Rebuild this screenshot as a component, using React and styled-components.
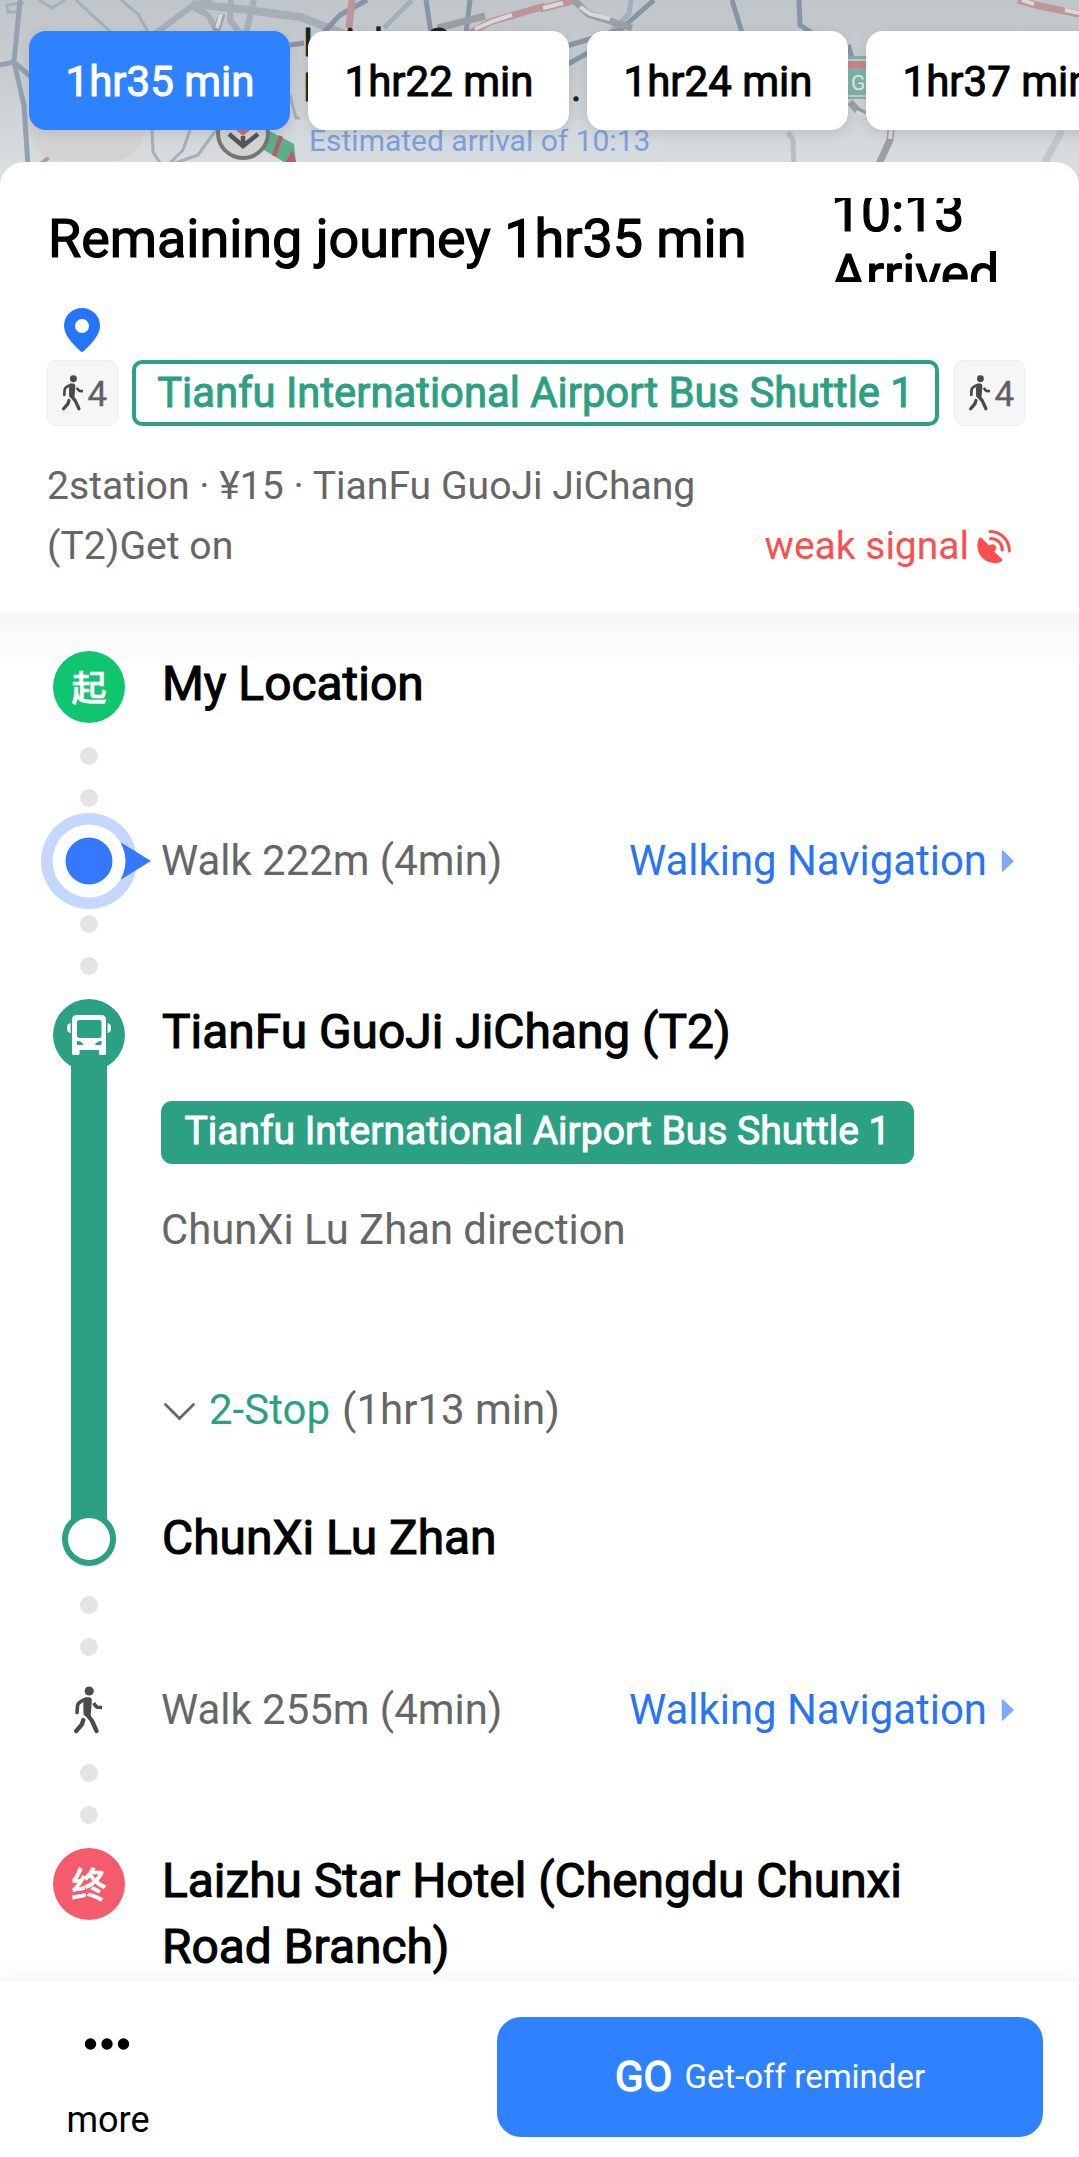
import React from 'react';
import styled, { createGlobalStyle } from 'styled-components';

const GlobalStyle = createGlobalStyle`
  * {
    box-sizing: border-box;
  }

  body {
    margin: 0;
    background: #fff;
    font-family: Roboto, 'Noto Sans CJK SC', sans-serif;
    color: #000;
  }

  svg {
    display: block;
    flex: none;
  }
`;

const colors = {
  blue: '#2e82ff',
  link: '#2874f5',
  bus: '#2ca082',
  text: '#666',
  dot: '#e4e4e4',
};

const Page = styled.div`
  width: 1079px;
  height: 2157px;
  display: flex;
  flex-direction: column;
  overflow: hidden;
`;

const MapArea = styled.div`
  position: relative;
  height: 192px;
  flex: none;
  overflow: hidden;

  > svg {
    position: absolute;
    top: 0;
    left: 0;
  }
`;

const ChipRow = styled.div`
  position: relative;
  display: flex;
  gap: 18px;
  padding: 31px 0 0 29px;
`;

const Chip = styled.div`
  flex: none;
  width: 261px;
  height: 99px;
  padding: 2px 0 0 1px;
  display: flex;
  align-items: center;
  justify-content: center;
  border-radius: 17px;
  background: ${props => (props.$active ? colors.blue : '#fff')};
  color: ${props => (props.$active ? '#fff' : '#000')};
  font-size: 42px;
  -webkit-text-stroke: 1px currentColor;
  box-shadow: 0 3px 12px rgba(60, 70, 80, 0.16);
`;

const Summary = styled.section`
  position: relative;
  flex: none;
  height: 450px;
  margin-top: -30px;
  padding: 36px 54px 0 47px;
  background: #fff;
  border-radius: 24px 24px 0 0;
  z-index: 1;
`;

const TitleRow = styled.div`
  display: flex;
  justify-content: space-between;
  height: 84px;
  overflow: hidden;
`;

const Title = styled.h1`
  margin: 0;
  padding-left: 1px;
  line-height: 82px;
  font-size: 53.900px;
  font-weight: 400;
  white-space: nowrap;
  -webkit-text-stroke: 1.2px currentColor;
`;

const Arrival = styled.div`
  width: 194px;
  display: flex;
  flex-direction: column;
  justify-content: center;
  font-size: 53.500px;
  -webkit-text-stroke: 1.2px currentColor;

  span {
    flex: none;
    line-height: 61px;
  }

  span:first-child {
    padding-top: 5px;
  }
`;

const PinRow = styled.div`
  padding: 26px 0 8px 17px;
`;

const RouteRow = styled.div`
  display: flex;
  justify-content: space-between;
`;

const WalkChip = styled.div`
  width: 71px;
  height: 66px;
  padding-left: 14px;
  display: flex;
  align-items: center;
  gap: 3px;
  border: 1px solid #eceef0;
  border-radius: 9px;
  background: #f5f6f8;
  color: #606060;
  font-size: 35px;
  -webkit-text-stroke: 0.3px currentColor;

  span {
    padding-top: 2px;
  }
`;

const LineTag = styled.div`
  width: 807px;
  height: 66px;
  margin-right: 1px;
  border: 4px solid ${colors.bus};
  border-radius: 10px;
  color: ${colors.bus};
  font-size: 41.800px;
  line-height: 57px;
  text-align: center;
  -webkit-text-stroke: 1px currentColor;
`;

const InfoRow = styled.div`
  display: flex;
  justify-content: space-between;
  align-items: flex-end;
  margin-top: 30px;
  padding-right: 14px;
  font-size: 39.150px;
  line-height: 60px;
  color: ${colors.text};
`;

const InfoText = styled.div`
  width: 660px;
`;

const Signal = styled.div`
  display: flex;
  align-items: center;
  gap: 8px;
  color: #fb4f4f;
  font-size: 39px;
`;

const Timeline = styled.main`
  flex: none;
  height: 1369px;
  padding: 39px 65px 0 41px;
  background: linear-gradient(#f5f6f8, #fafafa 22px, #fff 60px);
`;

const Step = styled.div`
  display: grid;
  grid-template-columns: 96px 1fr;
  column-gap: 24px;
`;

const Rail = styled.div`
  display: flex;
  flex-direction: column;
  align-items: center;
`;

const StopName = styled.div`
  padding-left: 1px;
  font-size: 47.900px;
  line-height: ${props => props.$line || 66}px;
  -webkit-text-stroke: 1.1px currentColor;
`;

const EndBadge = styled.div`
  width: 72px;
  height: 72px;
  border-radius: 50%;
  background: ${props => props.$color};
  color: #fff;
  font-family: 'Noto Sans CJK SC', sans-serif;
  font-size: 35px;
  font-weight: 500;
  line-height: 70px;
  text-align: center;
  -webkit-text-stroke: 0.6px currentColor;
`;

const Dots = styled.div`
  width: 96px;
  display: flex;
  flex-direction: column;
  align-items: center;
  gap: 24px;
  padding: ${props => props.$top}px 0 ${props => props.$bottom}px;

  i {
    width: 18px;
    height: 18px;
    border-radius: 50%;
    background: ${colors.dot};
  }
`;

const WalkRow = styled(Step)`
  height: 96px;
  align-items: center;
`;

const WalkText = styled.div`
  display: flex;
  justify-content: space-between;
  font-size: 41.900px;
  line-height: 60px;
  color: ${colors.text};
`;

const NavLink = styled.div`
  display: flex;
  align-items: center;
  gap: 14px;
  color: ${colors.link};
`;

const RideBar = styled.div`
  flex: 1;
  width: 36px;
  margin: -8px 0;
  background: ${colors.bus};
`;

const RideEnd = styled.div`
  position: relative;
  width: 54px;
  height: 54px;
  border: 6px solid ${colors.bus};
  border-radius: 50%;
  background: #fff;
`;

const RideTag = styled.div`
  width: 753px;
  height: 63px;
  margin: 36px 0;
  border-radius: 11px;
  background: ${colors.bus};
  color: #fff;
  font-size: 39px;
  line-height: 61px;
  text-align: center;
  -webkit-text-stroke: 1px currentColor;
`;

const RideText = styled.div`
  font-size: 41.800px;
  line-height: 60px;
  color: ${colors.text};
`;

const StopCount = styled(RideText)`
  display: flex;
  align-items: center;
  margin: 120px 0 70px;
  padding-left: 3px;
  font-size: 42px;

  svg {
    margin: 4px 14px 0 0;
  }

  em {
    font-style: normal;
    color: ${colors.bus};
    margin-right: 12px;
  }
`;

const Footer = styled.footer`
  position: relative;
  flex: 1;
  display: flex;
  justify-content: space-between;
  padding: 36px 36px 20px 0;
  background: #fff;
  box-shadow: 0 -2px 20px rgba(0, 0, 0, 0.06);
  z-index: 1;
`;

const More = styled.div`
  width: 216px;
  padding-top: 21px;
  display: flex;
  flex-direction: column;
  align-items: center;
  gap: 49px;
  font-size: 36px;
  line-height: 42px;
`;

const GoButton = styled.button`
  width: 546px;
  height: 120px;
  padding: 0 0 2px;
  display: flex;
  align-items: center;
  justify-content: center;
  gap: 12px;
  border: none;
  border-radius: 24px;
  background: ${colors.blue};
  color: #fff;
  font-family: inherit;
  font-size: 33px;

  b {
    font-size: 42px;
    font-weight: 400;
    -webkit-text-stroke: 1.4px currentColor;
  }
`;

const CityMap = () => (
  <svg width="1079" height="192" viewBox="0 0 1079 192" fill="none">
    <defs>
      <linearGradient id="sky" x1="0" y1="0" x2="0" y2="1">
        <stop offset="0" stopColor="#c0c5c9" />
        <stop offset="0.5" stopColor="#cbd0d4" />
        <stop offset="0.9" stopColor="#dadee1" />
      </linearGradient>
    </defs>
    <rect width="1079" height="192" fill="url(#sky)" />
    {/* minor streets */}
    <g stroke="#a5afb8" strokeWidth="3">
      <path d="M24 3 L7 5 L8 12 L14 12 L22 10 M39 0 L52 8 L65 0" />
      <path d="M76 0 L92 15 L112 33 M121 0 L138 14 L148 32" />
      <path d="M152 36 L192 6 L212 0" strokeWidth="6" />
      <path d="M192 4 L240 9 L300 17 L345 34" strokeWidth="8" />
      <path d="M194 8 L208 15 L218 33 M231 0 L230 20 L240 33 M254 0 L246 33" strokeWidth="6" />
      <path d="M152 130 L153 152 L162 166 M190 130 L183 150 L170 163 M216 130 L198 155 L170 165" />
      <path d="M412 0 L384 28 M631 0 L629 14 L610 32" strokeWidth="5" />
      <path d="M788 132 L793 140 L794 166" strokeWidth="5" stroke="#b5bec7" />
      <path d="M1062 130 L1043 166" strokeWidth="7" stroke="#c1c6cb" />
      <path d="M290 95 L296 118 L300 118" />
    </g>
    {/* main roads */}
    <g stroke="#8695a8" strokeWidth="5">
      <path d="M20 0 L14 62 L0 65 M14 62 L30 76 M14 62 L24 105 L28 166" stroke="#93a1b0" />
      <path d="M367 0 L340 15 L322 34 M426 0 L431 33 M470 0 L466 33" />
      <path d="M654 0 L620 30 L560 48 M732 0 L742 33 M799 0 L800 25 L812 33 M568 64 L588 53 M848 45 L852 58" />
      <path d="M290 45 L304 43" />
    </g>
    {/* expressways */}
    <g strokeWidth="7" stroke="#bc969c">
      <path d="M352 0 L349 28 M470 33 L490 22 L545 6 M540 9 L576 0" />
      <path d="M1018 0 L1040 6 L1079 14" />
      <path d="M38 166 L58 150" strokeWidth="4" />
    </g>
    <g strokeWidth="7" stroke="#9c9ea5">
      <path d="M222 14 L216 32 M438 28 L485 16 M574 0 L588 14 L632 28 M850 102 L857 110 L868 116 M891 130 L890 140 L878 166" />
    </g>
    <g strokeWidth="4" stroke="#dcd8d9">
      <path d="M221 14 L217 28 M475 29 L493 21 L512 15 M543 8 L563 3 M580 7 L590 14 L610 19 M856 112 L867 117 M891 130 L890 139 M1022 0 L1034 4 M1065 10 L1079 13" />
    </g>
    <rect x="29" y="40" width="116" height="121" rx="34" fill="#d2d2d1" />
    <rect x="294" y="120" width="370" height="50" fill="#d4dadf" opacity="0.6" />
    {/* route piece with the arrival marker */}
    <path d="M268 130 L294 144 L296 162 L284 162 L264 150 Z" fill="#5cad8a" />
    <path d="M281 136 L274 156" stroke="#bd5968" strokeWidth="4" />
    <path d="M292 150 L296 162 L286 162 Z" fill="#bd5968" />
    <circle cx="243" cy="133" r="25" fill="#d2d3d3" stroke="#777574" strokeWidth="4" />
    <path d="M236 130 h14 l-7 6 z" fill="#d36c6c" />
    <path d="M229 134 L243 146 L258 134 M243 136 V146" stroke="#555" strokeWidth="4.500" />
    <rect x="840" y="56" width="40" height="43" fill="#7db3a5" />
    <path d="M840 60 H880 M840 96 H880" stroke="#c9dbd6" strokeWidth="1.500" />
    <rect x="840" y="61" width="40" height="7" fill="#d08287" />
    <g fontFamily="Roboto, sans-serif">
      <text x="851" y="90" fontSize="21" fill="#dfe9e6">G</text>
      <g fontSize="39" fill="#1d1f20" stroke="#1d1f20" strokeWidth="0.800">
        <text x="303" y="56">Laizhu S</text>
        <text x="303" y="101">R</text>
        <text x="571" y="101">.</text>
      </g>
      <text x="309" y="150.500" fontSize="30" fill="#7b9fdb">Estimated arrival of 10:13</text>
    </g>
  </svg>
);

const PinIcon = () => (
  <svg width="36" height="44" viewBox="0 0 36 44">
    <path
      d="M18 0C8 0 0 8 0 17.6 0 27 8 35.500 16.500 43.300c.9.8 2.100.8 3 0C28 35.500 36 27 36 17.600 36 8 28 0 18 0Z"
      fill="#2575fb"
    />
    <circle cx="18" cy="18" r="7" fill="#fff" />
  </svg>
);

const WalkIcon = ({ height = 48 }) => (
  <svg
    width={height * 0.625}
    height={height}
    viewBox="0 0 30 48"
    fill="none"
    stroke="#4a4a4a"
    strokeLinecap="round"
    strokeLinejoin="round"
  >
    <circle cx="15.200" cy="5" r="4.600" fill="#4a4a4a" stroke="none" />
    <path
      d="M11.500 12 Q13 11 15 11.200 Q18 11.500 17.800 15 L17 26 L16.500 30 Q13 32.500 9.500 28.500 L9.300 17 Z"
      fill="#4a4a4a"
      stroke="none"
    />
    <path d="M3 26.500 L3.600 19 Q4.500 16 12 13" strokeWidth="3.600" />
    <path d="M19.800 17 Q21.500 20.600 23.500 21.200 L28 21.500" strokeWidth="3.600" strokeLinecap="butt" />
    <path d="M13 28.500 L17.800 34.500 L22.600 45" strokeWidth="4.300" />
    <path d="M9.300 34 L7.800 38.500 L2.200 45" strokeWidth="4.300" />
  </svg>
);

const SignalIcon = () => (
  <svg width="34" height="34" viewBox="0 0 34 34" fill="none" stroke="#fb4f4f" strokeWidth="3">
    <path
      d="M4.800 9 C3.200 7.900 2 8.800 1.200 11.500 C-1 18 1 25 6 29.500 C11 34 18 35.200 23.500 33 C25.600 32 25.800 30.600 24.600 29.600 L17.600 23 L11.500 16 Z"
      fill="#fb4f4f"
      stroke="none"
    />
    <circle cx="15.300" cy="19" r="3.700" fill="#fb4f4f" stroke="none" />
    <path d="M13 2.600 C24 2.600 32.300 11 32.300 22" strokeLinecap="round" />
    <path d="M13.500 9.500 C20.500 9.500 25.300 14.500 25.300 21" strokeLinecap="round" />
  </svg>
);

const LocationIcon = () => (
  <svg width="96" height="96" viewBox="0 0 96 96" overflow="visible">
    <circle cx="48" cy="48" r="48" fill="#c5d7ff" />
    <path d="M80 29.500 L110 48 L80 66.500 Z" fill="#3478ff" />
    <circle cx="48" cy="48" r="36.500" fill="#fff" />
    <circle cx="48" cy="48" r="23.500" fill="#3478ff" />
  </svg>
);

const BusIcon = () => (
  <svg width="72" height="72" viewBox="0 0 72 72">
    <circle cx="36" cy="36" r="36" fill={colors.bus} />
    <path
      d="M24 16 H48 Q53 16 53 21 V54.500 Q53 56 51.500 56 H47.500 Q46 56 46 54.500 V51 H26.500 V54.500 Q26.500 56 25 56 H20.500 Q19 56 19 54.500 V21 Q19 16 24 16 Z"
      fill="#fff"
    />
    <path d="M17.600 24 Q14 25 14 28 V30 Q14 33 17.600 34 Z M54.600 24 Q58 25 58 28 V30 Q58 33 54.600 34 Z" fill="#fff" />
    <rect x="24" y="21" width="24.500" height="18" rx="2.500" fill={colors.bus} />
    <path d="M24 42 Q29 42 30.500 46 H24.800 Q24 46 24 45 Z M48.500 42 Q43.500 42 42 46 H47.700 Q48.500 46 48.500 45 Z" fill={colors.bus} />
  </svg>
);

const WalkStep = ({ icon, text }) => (
  <WalkRow>
    <Rail>{icon}</Rail>
    <WalkText>
      <span>{text}</span>
      <NavLink>
        Walking Navigation
        <svg width="13" height="22" viewBox="0 0 13 22">
          <path d="M1.500 1 L12 11 L1.500 21 Z" fill="#7daafc" stroke="#7daafc" strokeWidth="1.500" strokeLinejoin="round" />
        </svg>
      </NavLink>
    </WalkText>
  </WalkRow>
);

const options = ['1hr35 min', '1hr22 min', '1hr24 min', '1hr37 min'];

const App = () => {
  return (
    <Page>
      <GlobalStyle />

      <MapArea>
        <CityMap />
        <ChipRow>
          {options.map((option, index) => (
            <Chip key={option} $active={index === 0}>{option}</Chip>
          ))}
        </ChipRow>
      </MapArea>

      <Summary>
        <TitleRow>
          <Title>Remaining journey 1hr35 min</Title>
          <Arrival>
            <span>10:13</span>
            <span>Arrived</span>
          </Arrival>
        </TitleRow>
        <PinRow>
          <PinIcon />
        </PinRow>
        <RouteRow>
          <WalkChip><WalkIcon height={36} /><span>4</span></WalkChip>
          <LineTag>Tianfu International Airport Bus Shuttle 1</LineTag>
          <WalkChip><WalkIcon height={36} /><span>4</span></WalkChip>
        </RouteRow>
        <InfoRow>
          <InfoText>2station · ¥15 · TianFu GuoJi JiChang (T2)Get on</InfoText>
          <Signal>weak signal<SignalIcon /></Signal>
        </InfoRow>
      </Summary>

      <Timeline>
        <Step>
          <Rail><EndBadge $color="#10c56f">起</EndBadge></Rail>
          <StopName>My Location</StopName>
        </Step>
        <Dots $top={24} $bottom={6}><i /><i /></Dots>
        <WalkStep icon={<LocationIcon />} text="Walk 222m (4min)" />
        <Dots $top={6} $bottom={24}><i /><i /></Dots>

        <Step>
          <Rail>
            <BusIcon />
            <RideBar />
            <RideEnd />
          </Rail>
          <div>
            <StopName>TianFu GuoJi JiChang (T2)</StopName>
            <RideTag>Tianfu International Airport Bus Shuttle 1</RideTag>
            <RideText>ChunXi Lu Zhan direction</RideText>
            <StopCount>
              <svg width="31" height="18" viewBox="0 0 31 18" fill="none" stroke="#666" strokeWidth="2.800">
                <path d="M1.500 1.500 L15.500 15.500 L29.500 1.500" strokeLinecap="round" />
              </svg>
              <em>2-Stop</em>
              <span>(1hr13 min)</span>
            </StopCount>
            <StopName $line={56}>ChunXi Lu Zhan</StopName>
          </div>
        </Step>

        <Dots $top={30} $bottom={6}><i /><i /></Dots>
        <WalkStep icon={<WalkIcon />} text="Walk 255m (4min)" />
        <Dots $top={6} $bottom={24}><i /><i /></Dots>
        <Step>
          <Rail><EndBadge $color="#f45c6d">终</EndBadge></Rail>
          <StopName>Laizhu Star Hotel (Chengdu Chunxi Road Branch)</StopName>
        </Step>
      </Timeline>

      <Footer>
        <More>
          <svg width="46" height="12" viewBox="0 0 46 12">
            <circle cx="5.500" cy="6" r="5.700" />
            <circle cx="22" cy="6" r="5.700" />
            <circle cx="38.500" cy="6" r="5.700" />
          </svg>
          more
        </More>
        <GoButton><b>GO</b>Get-off reminder</GoButton>
      </Footer>
    </Page>
  );
};

export default App;
